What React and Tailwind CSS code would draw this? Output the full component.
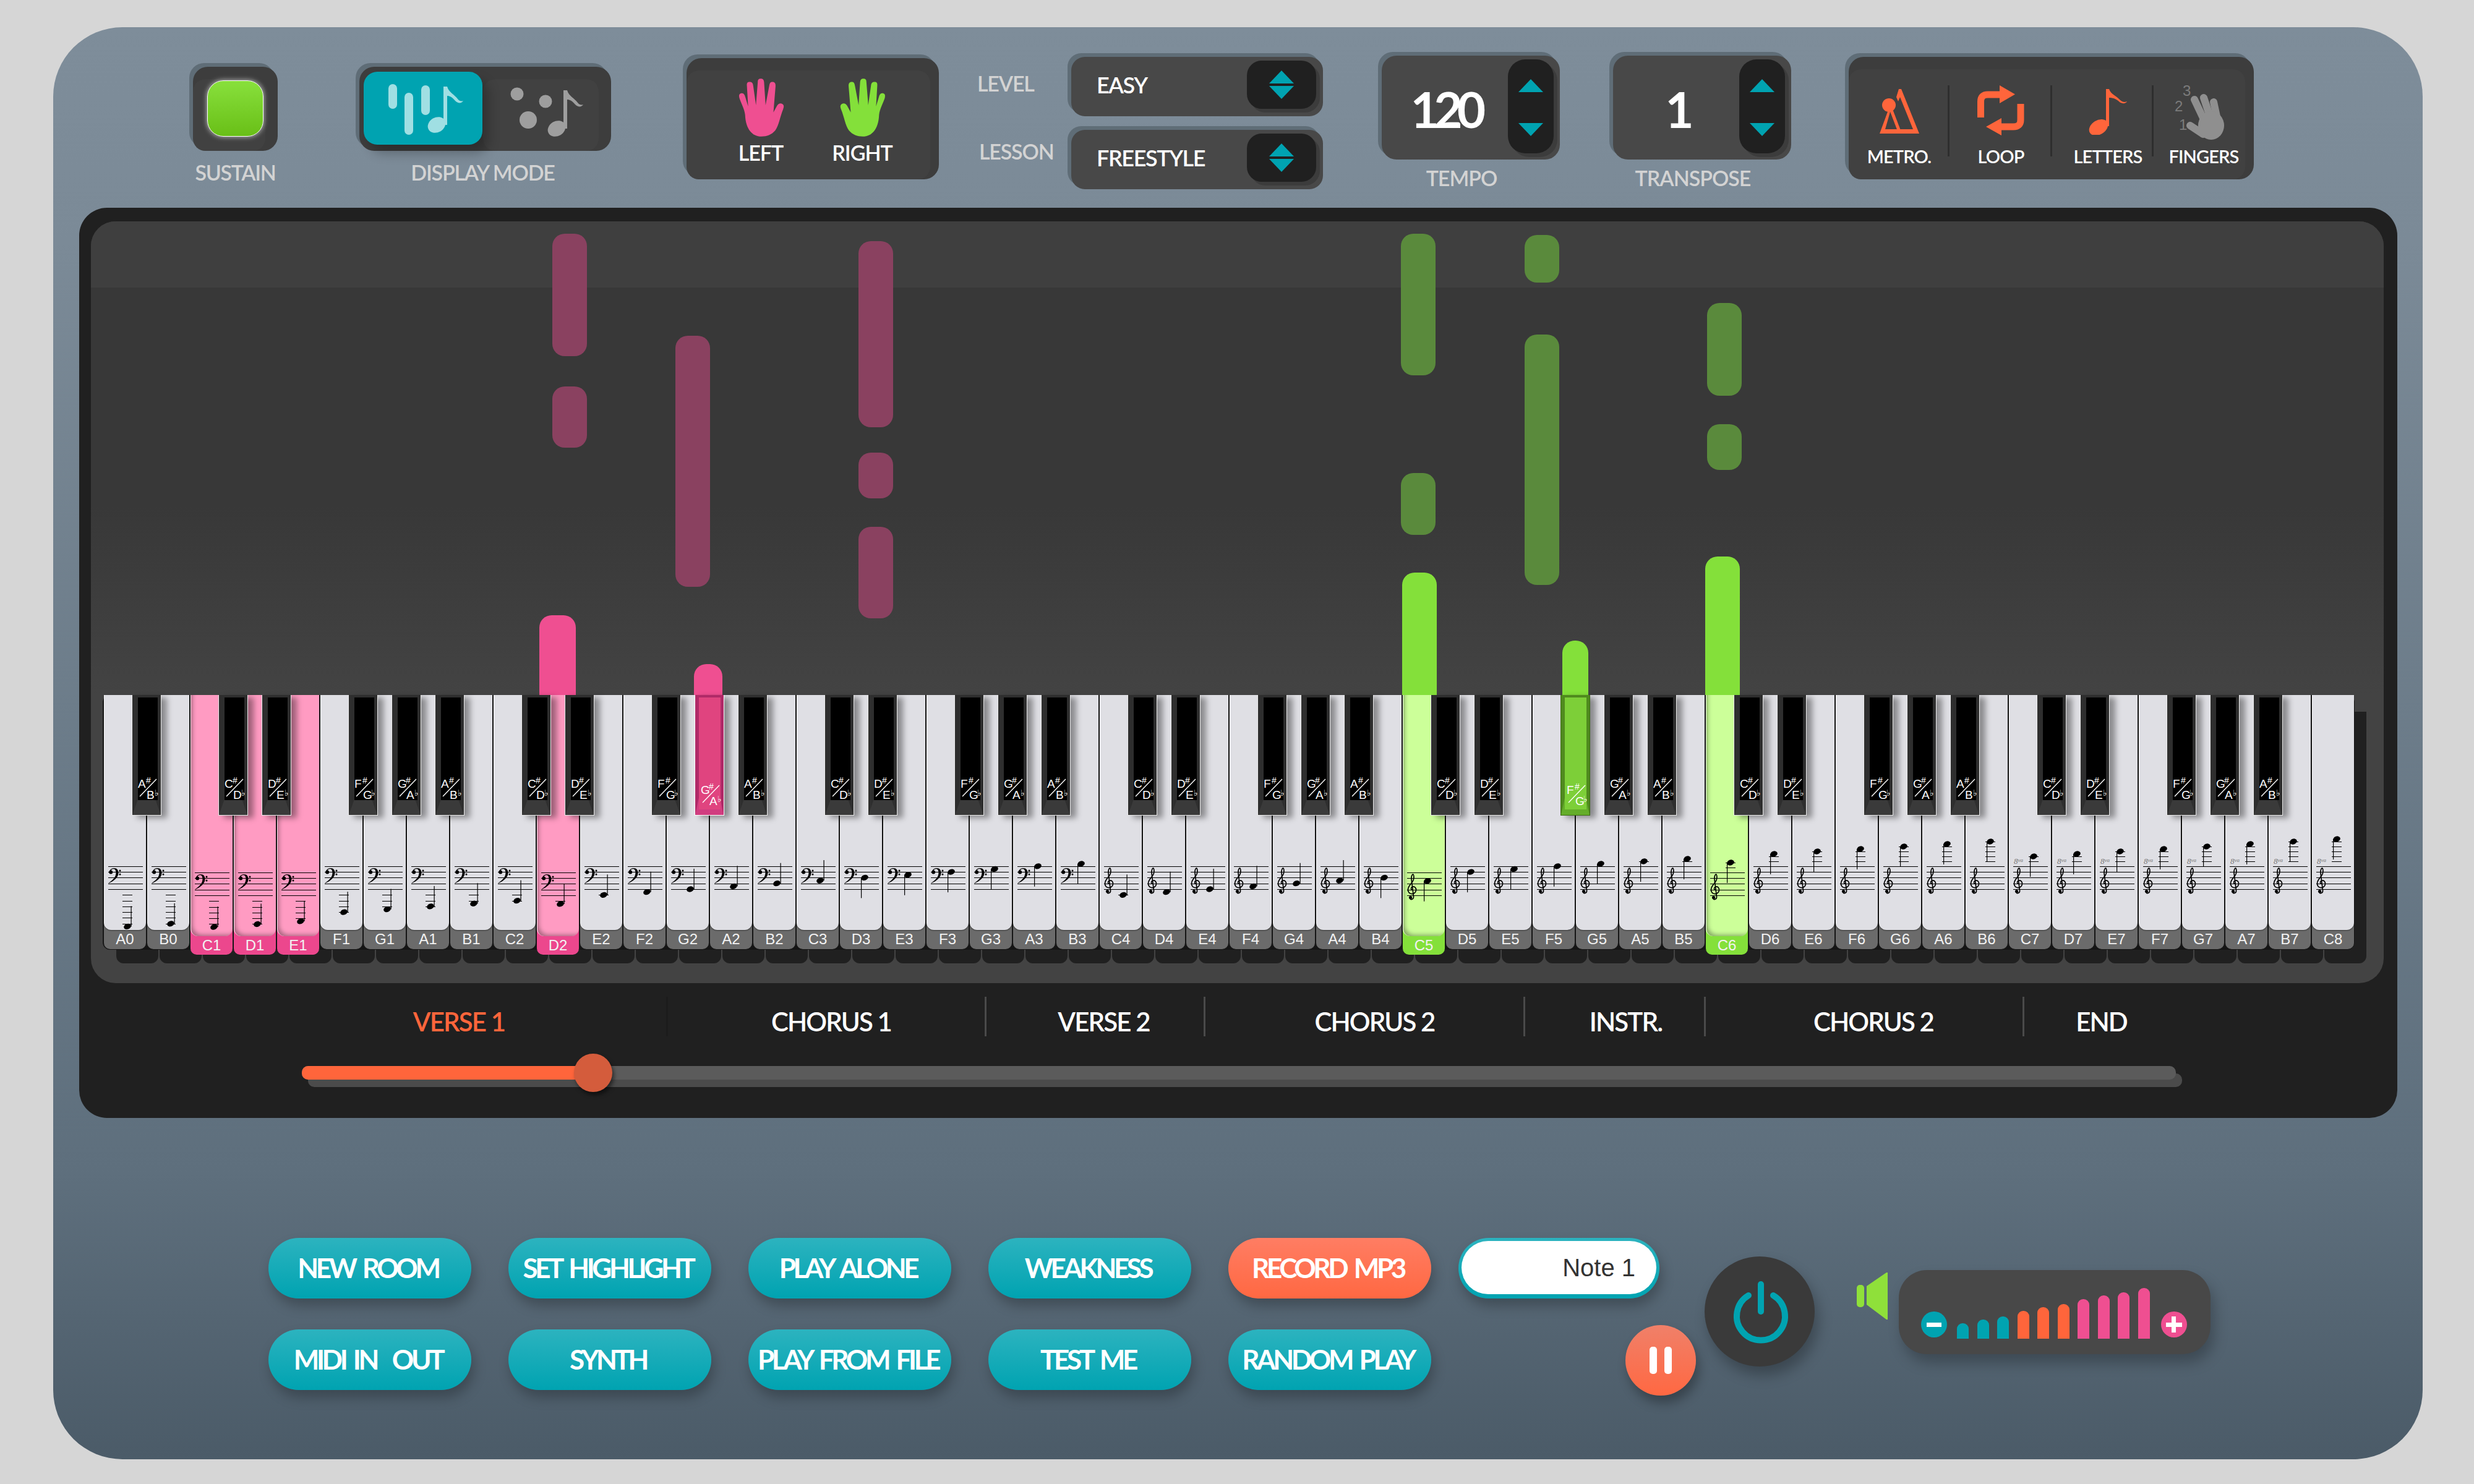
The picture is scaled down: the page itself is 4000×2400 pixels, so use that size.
const UI = "[font-family:Lato,sans-serif] whitespace-nowrap";
const WHITE_NAMES = ["A", "B", "C", "D", "E", "F", "G"];
const PINK_KEYS = [2, 3, 4, 10];
const GREEN_KEYS = [30, 37];

function keyName(i) {
  const letter = WHITE_NAMES[i % 7];
  const octave = i < 2 ? 0 : Math.floor((i - 2) / 7) + 1;
  return letter + octave;
}

function noteY(i) {
  const e = i >= 44 ? i - 7 : i;
  if (e <= 13) return 1438 + (13 - e) * 4.65;
  if (e <= 21) return 1438 - (e - 13) * 4.65;
  if (e === 22) return 1397;
  if (e <= 33) return 1438 - (e - 25) * 4.65;
  return 1401 - (e - 33) * 4;
}

function BassClef() {
  return (
    <g transform="translate(7,64)">
      <path d="M2 6.5C2 2.5 5.5 0 9.5 0C14.5 0 16.5 3.5 16.5 8C16.5 15 9 21 0.8 24.5L0.4 24C6.5 20 12.5 15 12.5 7.5C12.5 3.5 11 1.2 8.5 1.2C6.5 1.2 5 2.2 4.4 4Z" fill="#000" />
      <circle cx="4.2" cy="6.4" r="3" fill="#000" />
      <circle cx="19" cy="4" r="1.5" fill="#000" />
      <circle cx="19" cy="10" r="1.5" fill="#000" />
    </g>
  );
}

function TrebleClef() {
  return (
    <g transform="translate(7,63)">
      <path d="M8.5 26.5C6 26 5.5 22.8 8.5 21.2C12 20 15 23 14.5 27C14 31 10 33 6.5 32.5C2 31.5 0.5 27 2 23C3.5 18 9.5 14 10.5 9C11.5 5 10.5 1 9.5 0.8C8 1 6.5 5 7 9L10.5 37C11 41 7 42.5 5 41" fill="none" stroke="#000" strokeWidth="1.7" />
      <circle cx="5.5" cy="38.5" r="2.6" fill="#000" />
    </g>
  );
}

function Staff({ i, pressed }) {
  const y = noteY(i) - 1340;
  const treble = i >= 23;
  const eff = i >= 44 ? i - 7 : i;
  const up = treble ? eff < 29 : eff < 17;
  const cx = up ? 38 : 40;
  const ledgers = [];
  if (!treble) {
    for (let k = 1; 13 - 2 * k >= eff; k++) ledgers.push(98 + 9.25 * k);
  } else if (eff <= 23) {
    ledgers.push(107);
  } else if (eff > 33) {
    for (let k = 1; 33 + 2 * k <= eff; k++) ledgers.push(61 - 8 * k);
  }
  return (
    <svg className={pressed ? "absolute left-0 top-[226px]" : "absolute left-0 top-[216px]"} width="68" height="170" viewBox="0 0 68 170">
      {[61, 70, 79, 89, 98].map((l) => (
        <rect key={l} x="7" y={l} width="56" height="1" fill="#000" />
      ))}
      {treble ? <TrebleClef /> : <BassClef />}
      {ledgers.map((l) => (
        <rect key={l} x={cx - 8} y={Math.round(l)} width="16" height="1" fill="#000" />
      ))}
      <rect x={up ? cx + 5.5 : cx - 6} y={up ? y - 33 : y} width="1.2" height="33" fill="#000" />
      <ellipse cx={cx} cy={y} rx="6" ry="4.4" transform={`rotate(-20 ${cx} ${y})`} fill="#000" />
      {i >= 44 && (
        <text x="8" y="57" fontFamily="Liberation Serif" fontStyle="italic" fill="#777" fontSize="13">
          8<tspan fontSize="9" dy="-3">va</tspan>
        </text>
      )}
    </svg>
  );
}

function WhiteKey({ i }) {
  const pink = PINK_KEYS.includes(i);
  const green = GREEN_KEYS.includes(i);
  const pressed = pink || green;
  const outer = pink ? "bg-[#ec478d] h-[420px]" : green ? "bg-[#84e03a] h-[420px]" : "bg-[#6b6b6b] h-[411px]";
  const face = pink
    ? "bg-[#ff9bc2] h-[390px] shadow-[inset_6px_-6px_7px_-4px_rgba(0,0,0,0.35)]"
    : green
      ? "bg-[#ccff99] h-[390px] shadow-[inset_6px_-6px_7px_-4px_rgba(0,0,0,0.35)]"
      : "bg-[#dfdfe4] h-[380px] shadow-[0_1px_2px_rgba(0,0,0,0.5)]";
  return (
    <div className={`relative w-[68px] ml-[2px] shrink-0 rounded-b-[10px] ${outer}`}>
      <div className={`relative rounded-b-[12px] border-l border-white/70 ${face}`} />
      <Staff i={i} pressed={pressed} />
      <div className="flex h-[30px] items-center justify-center [font-family:'Liberation_Sans',sans-serif] text-[24px] leading-none text-[#f2f2f2]">{keyName(i)}</div>
    </div>
  );
}

const BLACK_LABELS = { 1: ["A", "B"], 3: ["C", "D"], 4: ["D", "E"], 6: ["F", "G"], 0: ["G", "A"] };

function BlackKey({ b }) {
  const pink = b === 14;
  const green = b === 34;
  const pressed = pink || green;
  const [a, c] = BLACK_LABELS[b % 7];
  return (
    <div
      className={`absolute top-0 h-[195px] w-[48px] ${green ? "bg-[#4f8a1e] border-b border-x border-[#3c6e14]" : pink ? "bg-[#b02a68] border-b border-x border-white" : "bg-[#2e2e2e] border-b border-x border-white/90 border-t-0"} shadow-[9px_4px_9px_rgba(0,0,0,0.38)]`}
      style={{ left: 70 * b - 23 }}
    >
      <div className={pressed ? `absolute left-0 right-0 top-[164px] h-[30px] [clip-path:polygon(14%_0,86%_0,100%_100%,0_100%)] ${green ? "bg-[#64ad2a]" : "bg-[#d13d80]"}` : "absolute left-0 right-0 top-[169px] h-[25px] bg-[#3a3a3a] [clip-path:polygon(19%_0,81%_0,100%_100%,0_100%)]"} />
      <div className={pressed ? `absolute left-[6px] top-[4px] h-[181px] w-[35px] ${green ? "bg-[#7dcf38]" : "bg-[#e0447f]"}` : "absolute left-[9px] top-[4px] h-[166px] w-[32px] bg-black"} />
      <div className={pressed ? "absolute inset-x-0 top-[10px] h-full text-white [font-family:'Liberation_Sans',sans-serif] leading-none" : "absolute inset-x-0 top-0 h-full text-white [font-family:'Liberation_Sans',sans-serif] leading-none"}>
        <span className="absolute left-[9px] top-[134px] text-[19px] leading-[19px]">{a}</span>
        <span className="absolute left-[22px] top-[131px] text-[14px] leading-[14px]">#</span>
        <svg className="absolute left-[11px] top-[134px]" width="30" height="32" viewBox="0 0 30 32">
          <line x1="1" y1="30" x2="28" y2="2" stroke="#fff" strokeWidth="1.4" />
        </svg>
        <span className="absolute left-[23px] top-[152px] text-[19px] leading-[19px]">{c}</span>
        <span className="absolute left-[36px] top-[151px] text-[14px] leading-[14px] [font-family:'DejaVu_Sans',sans-serif]">♭</span>
      </div>
    </div>
  );
}

const ROLL_NOTES = [
  [893, 378, 56, 198, "#8a4160"], [893, 625, 56, 99, "#8a4160"], [1092, 543, 56, 406, "#8a4160"],
  [1388, 390, 56, 301, "#8a4160"], [1388, 732, 56, 74, "#8a4160"], [1388, 852, 56, 148, "#8a4160"],
  [2265, 378, 56, 229, "#5a8a3c"], [2265, 765, 56, 100, "#5a8a3c"], [2465, 380, 56, 77, "#5a8a3c"],
  [2465, 541, 56, 405, "#5a8a3c"], [2760, 490, 56, 150, "#5a8a3c"], [2760, 686, 56, 74, "#5a8a3c"],
];
const LIVE_NOTES = [
  [872, 995, 59, 129, "#ef4f91"], [1122, 1074, 46, 50, "#ef4f91"],
  [2267, 926, 56, 198, "#84e03a"], [2526, 1036, 42, 88, "#84e03a"], [2757, 900, 56, 224, "#84e03a"],
];

function Roll() {
  return (
    <div className="relative h-[766px] rounded-t-[40px] bg-[linear-gradient(180deg,#383838_0%,#383838_60%,#434343_100%)]">
      <div className="h-[107px] rounded-t-[40px] bg-[#3f3f3f]" />
      {ROLL_NOTES.map(([x, y, w, h, c]) => (
        <div key={`${x}-${y}`} className="absolute rounded-[20px]" style={{ left: x - 147, top: y - 358, width: w, height: h, background: c }} />
      ))}
      {LIVE_NOTES.map(([x, y, w, h, c]) => (
        <div key={`${x}-${y}`} className="absolute rounded-t-[20px]" style={{ left: x - 147, top: y - 358, width: w, height: h, background: c }} />
      ))}
    </div>
  );
}

function Keyboard() {
  const whites = Array.from({ length: 52 }, (_, i) => i);
  const blacks = whites.filter((b) => b >= 1 && b <= 50 && [0, 1, 3, 4, 6].includes(b % 7));
  return (
    <div className="relative ml-[19px] h-[466px] w-[3640px]">
      <div className="absolute left-[22px] top-[27px] flex h-[407px] gap-[2px]">
        {whites.map((i) => (
          <div key={i} className="h-full w-[68px] rounded-b-[12px] bg-[#202020]" />
        ))}
      </div>
      <div className="absolute left-0 top-0 h-[412px] w-[3641px] rounded-[12px] bg-[#151515]" />
      <div className="relative flex items-start">
        {whites.map((i) => (
          <WhiteKey key={i} i={i} />
        ))}
      </div>
      {blacks.map((b) => (
        <BlackKey key={b} b={b} />
      ))}
    </div>
  );
}

const SECTIONS = [
  ["VERSE 1", 673, 0, "text-[#ff653b]", "border-[#1c1c1c]"],
  ["CHORUS 1", 515, 16, "text-white", "border-[#4a4a4a]"],
  ["VERSE 2", 354, 28, "text-white", "border-[#4a4a4a]"],
  ["CHORUS 2", 517, 33, "text-white", "border-[#4a4a4a]"],
  ["INSTR.", 292, 36, "text-white", "border-[#4a4a4a]"],
  ["CHORUS 2", 515, 30, "text-white", "border-[#4a4a4a]"],
  ["END", 252, 0, "text-white", "border-transparent"],
];

function Sections() {
  return (
    <div className="ml-[279px] mt-[22px] flex h-[64px]">
      {SECTIONS.map(([t, w, pl, c, b], idx) => (
        <div key={idx} className={`flex justify-center border-r-[3px] pt-[19px] ${b}`} style={{ width: w, paddingLeft: pl }}>
          <span className={`${UI} text-[42px] font-semibold leading-[42px] tracking-[-0.045em] ${c}`}>{t}</span>
        </div>
      ))}
    </div>
  );
}

function Slider() {
  return (
    <div className="relative ml-[360px] mt-[48px] h-[22px] w-[3030px] rounded-[10px] bg-[#5b5b5b] shadow-[10px_12px_0_#4b4b4b]">
      <div className="h-full w-[470px] rounded-l-[10px] bg-[#ff653b]" />
      <div className="absolute left-[440px] top-[-20px] h-[62px] w-[62px] rounded-full bg-[#d45c3c] shadow-[3px_5px_6px_rgba(0,0,0,0.5)]" />
    </div>
  );
}

function Box({ className, children }) {
  return <div className={`relative rounded-[24px] bg-[#3d3d3d] shadow-[-6px_-6px_0_#5f6d77] ${className}`}>{children}</div>;
}

function Sustain() {
  return (
    <div className="ml-[226px] mt-[64px] flex w-[137px] flex-col">
      <Box className="h-[136px] w-[137px]">
        <div className="absolute bottom-0 left-0 right-[20px] top-[20px] rounded-[20px] bg-[#414141]" />
        <div className="absolute left-[23px] top-[22px] h-[91px] w-[91px] rounded-[26px] border border-white bg-[linear-gradient(180deg,#88e03c,#69bf17)] shadow-[0_0_8px_rgba(255,255,255,0.7)]" />
      </Box>
      <div className={`${UI} mt-[18px] text-center text-[34px] font-semibold leading-[34px] tracking-[-0.04em] text-[#d3d3d3]`}>SUSTAIN</div>
    </div>
  );
}

function NoteGlyph({ x, y, fill }) {
  return (
    <g transform={`translate(${x},${y})`} fill={fill}>
      <path d="M9 0L15 0C18 10 26 12 32 20C35 24 38 24 41 23C38 28 32 27 28 23C23 17 19 15 15 15L15 62L9 62Z" />
      <ellipse cx="-2" cy="62" rx="15" ry="12" transform="rotate(-30 -2 62)" />
    </g>
  );
}

function DisplayMode() {
  return (
    <div className="ml-[132px] mt-[64px] flex w-[407px] flex-col">
      <Box className="h-[136px] w-[407px]">
        <div className="absolute bottom-0 right-[20px] top-[20px] left-[200px] rounded-[20px] bg-[#414141]" />
        <div className="absolute left-[7px] top-[8px] h-[118px] w-[192px] rounded-[22px] bg-[#00a3b1] shadow-[10px_14px_18px_rgba(0,0,0,0.25)]" />
        <svg className="absolute left-0 top-0" width="407" height="136" viewBox="0 0 407 136">
          <g fill="#a0dfe3">
            <rect x="47" y="28" width="14" height="40" rx="7" />
            <rect x="73" y="42" width="14" height="68" rx="7" />
            <rect x="100" y="30" width="14" height="48" rx="7" />
          </g>
          <NoteGlyph x="127" y="32" fill="#a0dfe3" />
          <g fill="#9e9e9e">
            <circle cx="255" cy="44" r="10.5" />
            <circle cx="301" cy="56" r="10.5" />
            <circle cx="273" cy="86" r="14" />
          </g>
          <NoteGlyph x="321" y="38" fill="#9e9e9e" />
        </svg>
      </Box>
      <div className={`${UI} mt-[18px] pr-[8px] text-center text-[34px] font-semibold leading-[34px] tracking-[-0.035em] text-[#d3d3d3]`}>DISPLAY MODE</div>
    </div>
  );
}

function Hand({ fill, flip }) {
  return (
    <svg width="74" height="96" viewBox="-1 0 76 96" className={flip ? "-scale-x-100" : ""}>
      <path
        fill={fill}
        d="M37 96C22 96 11 84 10 60C9 50 3 40 0.5 32C-1 26 1 24 5 24C8 24 9.5 27 10.5 31L15 46L13 12C12.5 7 14 5.5 17.5 5.5C21 5.5 23 7 23.5 12L28 44L31 6C31 1.5 32.5 0 36 0C39.5 0 41 1.5 41.5 6L44 44L50 12C51 7 52 5.5 55.5 5.5C59 5.5 61 8 60.5 13L57 56L63 45C65 41 69 40 72 42C75 44 74.5 47 73 51C68 63 66 78 60 86C54 93 46 96 37 96Z"
      />
    </svg>
  );
}

function Hands() {
  return (
    <div className="ml-[122px] mt-[50px]">
      <Box className="h-[196px] w-[408px]">
        <div className="absolute bottom-0 left-0 right-[14px] top-[20px] rounded-[20px] bg-[#414141]" />
        <div className="relative flex pl-[39px] pt-[32px]">
          {[["LEFT", "#ef4f91", false], ["RIGHT", "#84e03a", true]].map(([t, c, f]) => (
            <div key={t} className="flex w-[164px] flex-col items-center">
              <Hand fill={c} flip={f} />
              <div className={`${UI} mt-[10px] pr-[2px] text-[34px] font-semibold leading-[30px] tracking-[-0.03em] text-white`}>{t}</div>
            </div>
          ))}
        </div>
      </Box>
    </div>
  );
}

function UpDown({ gap }) {
  return (
    <svg width="42" height={gap} viewBox={`0 0 42 ${gap}`} className="shrink-0">
      <polygon points="21,0 41,21 1,21" fill="#00a3b1" />
      <polygon points={`1,${gap - 21} 41,${gap - 21} 21,${gap}`} fill="#00a3b1" />
    </svg>
  );
}

function SelectBox({ text }) {
  return (
    <div className="flex h-[96px] w-[407px] rounded-[22px] bg-[#484848] pl-[41px] pr-[11px] pt-[6px] shadow-[-6px_-6px_0_#5f6d77]">
      <div className={`${UI} flex-1 pt-[21px] text-[36px] font-semibold leading-[36px] tracking-[-0.04em] text-white`}>{text}</div>
      <div className="flex h-[78px] w-[112px] items-center justify-center rounded-[24px] bg-[#202020] shadow-[6px_6px_0_#3c3c3c]">
        <UpDown gap={46} />
      </div>
    </div>
  );
}

function LevelLesson() {
  return (
    <>
      <div className={`${UI} ml-[62px] flex w-[152px] flex-col text-[34px] font-semibold leading-[34px] tracking-[-0.035em] text-[#d3d3d3]`}>
        <div className="mt-[74px]">LEVEL</div>
        <div className="mt-[76px] pl-[3px]">LESSON</div>
      </div>
      <div className="mt-[48px] flex flex-col gap-[22px]">
        <SelectBox text="EASY" />
        <SelectBox text="FREESTYLE" />
      </div>
    </>
  );
}

function Stepper({ value, label, className }) {
  return (
    <div className={`mt-[46px] flex w-[288px] flex-col ${className}`}>
      <div className="flex h-[168px] rounded-[24px] bg-[#484848] pr-[10px] pt-[6px] shadow-[-6px_-6px_0_#5f6d77]">
        <div className={`${UI} flex-1 pl-[2px] pt-[40px] text-center text-[80px] font-bold leading-[80px] tracking-[-0.11em] text-white`}>{value}</div>
        <div className="flex h-[152px] w-[74px] items-start justify-center rounded-[28px] bg-[#202020] pt-[32px] shadow-[6px_6px_0_#3c3c3c]">
          <UpDown gap={92} />
        </div>
      </div>
      <div className={`${UI} mt-[13px] pr-[30px] text-center text-[34px] font-semibold leading-[34px] tracking-[-0.03em] text-[#d3d3d3]`}>{label}</div>
    </div>
  );
}

function MetroIcon() {
  return (
    <svg width="64" height="72" viewBox="0 0 64 72" className="mt-[6px]">
      <path fill="#ff653b" d="M31 0L35 0L64 72L0 72L14 34L17 37L9 65L54 65L33 13L30 20L27 13Z" />
      <circle cx="15" cy="26" r="11" fill="#ff653b" />
      <line x1="18" y1="32" x2="31" y2="66" stroke="#ff653b" strokeWidth="5" />
    </svg>
  );
}
function LoopIcon() {
  return (
    <svg width="76" height="81" viewBox="0 0 76 81" fill="none">
      <path d="M5.5 52L5.5 26Q5.5 15 17 15L40 15" stroke="#ff653b" strokeWidth="11" />
      <polygon points="36,0 61,14.5 36,29" fill="#ff653b" />
      <path d="M70 30L70 56Q70 67 58 67L36 67" stroke="#ff653b" strokeWidth="11" />
      <polygon points="39,53 14,67 39,81" fill="#ff653b" />
    </svg>
  );
}
function NoteIcon() {
  return (
    <svg width="62" height="74" viewBox="0 0 62 74" className="mt-[6px]">
      <path fill="#ff653b" d="M28 0L33 0C36 9 44 10 50 17C54 21 58 22 62 20C60 24 54 24 50 21C44 15 38 14 33 14L33 60L28 60Z" />
      <ellipse cx="16" cy="62" rx="16.5" ry="11.5" transform="rotate(-32 16 62)" fill="#ff653b" />
    </svg>
  );
}
function FingerIcon() {
  return (
    <svg width="81" height="90" viewBox="0 0 81 90" className="-ml-[14px] -mt-px overflow-visible">
      <g stroke="#8f8f8f" strokeWidth="12" strokeLinecap="round" fill="none">
        <line x1="32" y1="24" x2="48" y2="58" />
        <line x1="47" y1="21" x2="58" y2="54" />
        <line x1="63" y1="28" x2="69" y2="56" />
        <line x1="25" y1="66" x2="46" y2="80" />
      </g>
      <ellipse cx="59" cy="66" rx="21" ry="23" fill="#8f8f8f" />
      <g fill="#7b7b7b" fontFamily="Liberation Sans" fontSize="24">
        <text x="13" y="18">3</text>
        <text x="0" y="43">2</text>
        <text x="7" y="73">1</text>
      </g>
    </svg>
  );
}

function Toggles() {
  const items = [
    ["METRO.", <MetroIcon key="m" />, 163, "", true],
    ["LOOP", <LoopIcon key="l" />, 166, "", true],
    ["LETTERS", <NoteIcon key="n" />, 164, "pl-[16px]", true],
    ["FINGERS", <FingerIcon key="f" />, 162, "", false],
  ];
  return (
    <div className="ml-[93px] mt-[48px]">
      <Box className="flex h-[198px] w-[655px] pt-[46px]">
        <div className="absolute bottom-0 left-0 right-[14px] top-[20px] rounded-[20px] bg-[#414141]" />
        {items.map(([t, icon, w, pad, sep]) => (
          <div key={t} className={`relative flex h-[132px] flex-col items-center ${pad}`} style={{ width: w }}>
            {sep && <div className="absolute right-0 top-0 h-[115px] w-[3px] bg-[#2e2e2e]" />}
            <div className="h-[100px]">{icon}</div>
            <div className={`${UI} text-[29px] font-semibold leading-[30px] tracking-[-0.03em] text-white`}>{t}</div>
          </div>
        ))}
      </Box>
    </div>
  );
}

const BUTTONS = [
  ["NEW ROOM", false], ["SET HIGHLIGHT", false], ["PLAY ALONE", false], ["WEAKNESS", false], ["RECORD MP3", true],
  ["MIDI IN  OUT", false], ["SYNTH", false], ["PLAY FROM FILE", false], ["TEST ME", false], ["RANDOM PLAY", false],
];

function Buttons() {
  return (
    <div className="grid grid-cols-[repeat(5,328px)] gap-x-[60px] gap-y-[50px]">
      {BUTTONS.map(([t, hot]) => (
        <div
          key={t}
          className={`flex h-[98px] items-center justify-center rounded-[49px] pb-[3px] pr-[6px] shadow-[4px_12px_20px_rgba(0,0,0,0.25)] ${hot ? "bg-[linear-gradient(180deg,#ff7d63,#ff6842)]" : "bg-[linear-gradient(180deg,#2cb3bf,#00a3b1)]"}`}
        >
          <span className={`${UI} whitespace-pre text-[44px] font-bold leading-[44px] tracking-[-0.1em] [word-spacing:0.14em] text-white`}>{t}</span>
        </div>
      ))}
    </div>
  );
}

function NotePause() {
  return (
    <div className="ml-[44px] flex w-[384px] flex-col">
      <div className="h-[98px] w-[325px] rounded-[49px] bg-[linear-gradient(180deg,#2cb3bf,#00a3b1)] px-[5px] pb-[7px] pt-[5px] shadow-[4px_12px_20px_rgba(0,0,0,0.25)]">
        <div className="flex h-full items-center justify-end rounded-[43px] bg-white pr-[34px] [font-family:'Liberation_Sans',sans-serif] text-[40px] text-[#333]">Note 1</div>
      </div>
      <div className="ml-[270px] mt-[43px] flex h-[114px] w-[114px] items-center justify-center gap-[12px] rounded-full bg-[linear-gradient(180deg,#f08069,#ff6842)] shadow-[5px_12px_18px_rgba(0,0,0,0.3)]">
        <div className="h-[44px] w-[12px] rounded-[5px] bg-white" />
        <div className="h-[44px] w-[12px] rounded-[5px] bg-white" />
      </div>
    </div>
  );
}

function Power() {
  return (
    <div className="ml-[14px] mt-[30px] flex h-[178px] w-[178px] items-center justify-center rounded-full bg-[#3a3a3a] pl-[3px] pt-[4px] shadow-[6px_14px_22px_rgba(0,0,0,0.28)]">
      <svg width="98" height="104" viewBox="0 0 98 104" fill="none" stroke="#00a3b1" strokeWidth="10" strokeLinecap="round">
        <line x1="49" y1="6" x2="49" y2="50" />
        <path d="M29 24A39 39 0 1 0 69 24" />
      </svg>
    </div>
  );
}

function Speaker() {
  return (
    <svg width="50" height="76" viewBox="0 0 50 76" className="ml-[68px] mt-[56px] shrink-0">
      <rect x="0" y="20" width="12" height="36" rx="5" fill="#8fe03a" />
      <polygon points="16,22 48,0 50,0 50,76 48,76 16,52" fill="#8fe03a" />
    </svg>
  );
}

const VOL = [
  [25, "bg-[#00a3b1]"], [31, "bg-[#00a3b1]"], [36, "bg-[#00a3b1]"],
  [45, "bg-[#ff653b]"], [51, "bg-[#ff653b]"], [56, "bg-[#ff653b]"],
  [64, "bg-[#ef4f91]"], [70, "bg-[#ef4f91]"], [75, "bg-[#ef4f91]"], [82, "bg-[#ef4f91]"],
];

function Volume() {
  return (
    <div className="ml-[18px] mt-[52px] flex h-[136px] w-[504px] items-end rounded-[45px] bg-[#484848] pb-[25px] pl-[36px] shadow-[6px_14px_22px_rgba(0,0,0,0.25)]">
      <div className="mb-[2px] flex h-[42px] w-[42px] items-center justify-center rounded-full bg-[#00a3b1]">
        <div className="h-[7px] w-[24px] bg-white" />
      </div>
      <div className="ml-[16px] flex items-end gap-[13.5px]">
        {VOL.map(([h, c], i) => (
          <div key={i} className={`w-[19px] rounded-t-[9px] ${c}`} style={{ height: h }} />
        ))}
      </div>
      <div className="relative mb-[2px] ml-[18px] flex h-[42px] w-[42px] items-center justify-center rounded-full bg-[#ef4f91]">
        <div className="h-[7px] w-[26px] bg-white" />
        <div className="absolute h-[26px] w-[7px] bg-white" />
      </div>
    </div>
  );
}

export default function App() {
  return (
    <div className="h-[2400px] w-[4000px] bg-[#d6d6d6] pl-[86px] pt-[44px]">
      <div className="h-[2316px] w-[3831px] rounded-[112px] bg-[linear-gradient(180deg,#7e8d9a_0%,#7b8a97_15%,#5e6f7d_80%,#4b5b68_100%)]">
        <div className="flex h-[292px] items-start">
          <Sustain />
          <DisplayMode />
          <Hands />
          <LevelLesson />
          <Stepper value="120" label="TEMPO" className="ml-[95px]" />
          <Stepper value="1" label="TRANSPOSE" className="ml-[86px]" />
          <Toggles />
        </div>
        <div className="ml-[42px] h-[1472px] w-[3748px] rounded-[45px] bg-[#202020] pl-[19px] pt-[22px]">
          <div className="h-[1232px] w-[3707px] rounded-[40px] bg-[#434343]">
            <Roll />
            <Keyboard />
          </div>
          <div className="-ml-[19px]">
            <Sections />
            <Slider />
          </div>
        </div>
        <div className="ml-[348px] mt-[194px] flex items-start">
          <Buttons />
          <NotePause />
          <Power />
          <Speaker />
          <Volume />
        </div>
      </div>
    </div>
  );
}
